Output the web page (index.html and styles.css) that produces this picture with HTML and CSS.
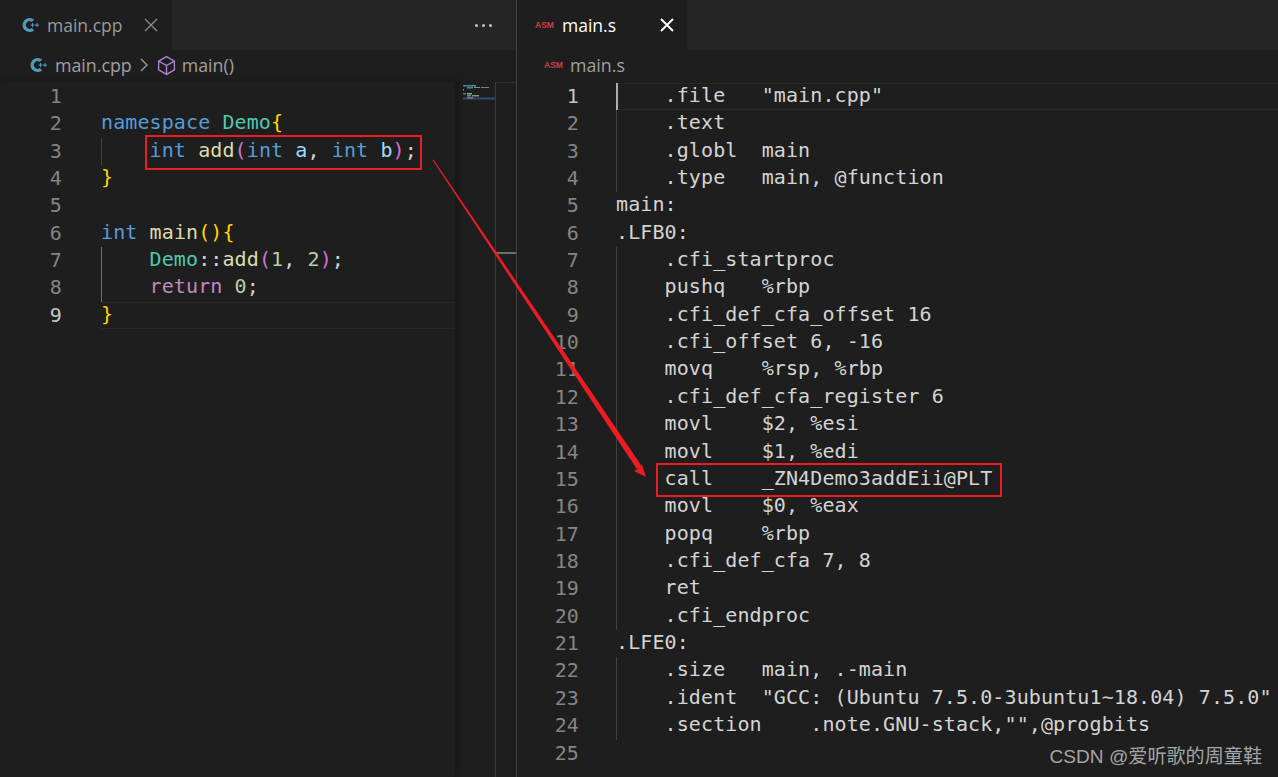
FILE: index.html
```html
<!DOCTYPE html>
<html lang="en">

<head>
    <meta charset="UTF-8">
    <title>main.s</title>
    <link rel="stylesheet" href="styles.css">
</head>

<body>
    <div class="workbench">
        <div class="pane pane-left">
            <div class="tabs">
                <div class="tab tab-left">
                    <svg class="cpp-icon" viewBox="0 0 17 16"><path class="cpp-c" d="M11 3.800A5.400 5.400 0 1 0 11 12.200" /><path class="cpp-plus" d="M8.500 8H12.500M10.500 6V10M13 8H17M15 6V10" /></svg>
                    <span class="tab-name">main.cpp</span>
                    <svg class="tab-close" viewBox="0 0 16 16"><path d="M2 2L14 14M14 2L2 14" /></svg>
                </div>
                <div class="tab-rest">
                    <span class="dots"><i></i><i></i><i></i></span>
                </div>
            </div>
            <div class="crumbs crumbs-left">
                <svg class="cpp-icon" viewBox="0 0 17 16"><path class="cpp-c" d="M11 3.800A5.400 5.400 0 1 0 11 12.200" /><path class="cpp-plus" d="M8.500 8H12.500M10.500 6V10M13 8H17M15 6V10" /></svg>
                <span class="crumb-file">main.cpp</span>
                <svg class="crumb-arrow" viewBox="0 0 10 16"><path d="M2 2L8 8L2 14" /></svg>
                <svg class="cube" viewBox="0 0 20 20"><path d="M10 1.500L17.500 5.800V14.200L10 18.500L2.500 14.200V5.800ZM2.500 5.800L10 10L17.500 5.800M10 10V18.500" /></svg>
                <span>main()</span>
            </div>
            <div class="body">
                <div class="code code-left">
                    <div class="line"><span class="num">1</span><span class="src"></span></div>
                    <div class="line"><span class="num">2</span><span class="src"><b class="kw">namespace</b> <b class="ty">Demo</b><b class="br">{</b></span></div>
                    <div class="line"><span class="num">3</span><span class="src guide">    <b class="kw">int</b> <b class="fn">add</b><b class="br2">(</b><b class="kw">int</b> <b class="var">a</b>, <b class="kw">int</b> <b class="var">b</b><b class="br2">)</b>;</span></div>
                    <div class="line"><span class="num">4</span><span class="src"><b class="br">}</b></span></div>
                    <div class="line"><span class="num">5</span><span class="src"></span></div>
                    <div class="line"><span class="num">6</span><span class="src"><b class="kw">int</b> <b class="fn">main</b><b class="br">()</b><b class="br">{</b></span></div>
                    <div class="line"><span class="num">7</span><span class="src guide guide-on">    <b class="ty">Demo</b>::<b class="fn">add</b><b class="br2">(</b><b class="lit">1</b>, <b class="lit">2</b><b class="br2">)</b>;</span></div>
                    <div class="line"><span class="num">8</span><span class="src guide guide-on">    <b class="ctl">return</b> <b class="lit">0</b>;</span></div>
                    <div class="line active"><span class="num">9</span><span class="src"><b class="br">}</b></span></div>
                </div>
                <div class="minimap">
                    <svg class="mini-lines" viewBox="0 0 32 18">
                        <rect x="0" y="15.500" width="32" height="2" fill="#264f78" />
                        <rect x="0" y="3" width="9" height="1.500" fill="#4a80ac" />
                        <rect x="9" y="3" width="4" height="1.500" fill="#3f9f8c" />
                        <rect x="4" y="5" width="6" height="1.500" fill="#4a80ac" />
                        <rect x="11" y="5" width="6" height="1" fill="#8f8f7a" />
                        <rect x="18" y="5" width="8" height="1" fill="#5f88a8" />
                        <rect x="0" y="7" width="1" height="1.500" fill="#b89a20" />
                        <rect x="0" y="11" width="3" height="1.500" fill="#4a80ac" />
                        <rect x="4" y="11" width="5" height="1.500" fill="#a0a080" />
                        <rect x="4" y="13" width="4" height="1.500" fill="#3f9f8c" />
                        <rect x="9" y="13" width="7" height="1.500" fill="#8f8f7a" />
                        <rect x="4" y="15" width="6" height="1.500" fill="#95688f" />
                    </svg>
                </div>
                <div class="scrollbar"><span class="scroll-mark"></span></div>
            </div>
        </div>
        <div class="pane pane-right">
            <div class="tabs">
                <div class="tab tab-right">
                    <span class="asm-icon">ASM</span>
                    <span class="tab-name tab-name-on">main.s</span>
                    <svg class="tab-close tab-close-on" viewBox="0 0 16 16"><path d="M2 2L14 14M14 2L2 14" /></svg>
                </div>
                <div class="tab-rest"></div>
            </div>
            <div class="crumbs crumbs-right">
                <span class="asm-icon">ASM</span>
                <span>main.s</span>
            </div>
            <div class="code code-right">
                <div class="line active-s"><span class="num num-on">1</span><span class="src guide cursor">    .file   "main.cpp"</span></div>
                <div class="line"><span class="num">2</span><span class="src guide">    .text</span></div>
                <div class="line"><span class="num">3</span><span class="src guide">    .globl  main</span></div>
                <div class="line"><span class="num">4</span><span class="src guide">    .type   main, @function</span></div>
                <div class="line"><span class="num">5</span><span class="src">main:</span></div>
                <div class="line"><span class="num">6</span><span class="src">.LFB0:</span></div>
                <div class="line"><span class="num">7</span><span class="src guide">    .cfi_startproc</span></div>
                <div class="line"><span class="num">8</span><span class="src guide">    pushq   %rbp</span></div>
                <div class="line"><span class="num">9</span><span class="src guide">    .cfi_def_cfa_offset 16</span></div>
                <div class="line"><span class="num">10</span><span class="src guide">    .cfi_offset 6, -16</span></div>
                <div class="line"><span class="num">11</span><span class="src guide">    movq    %rsp, %rbp</span></div>
                <div class="line"><span class="num">12</span><span class="src guide">    .cfi_def_cfa_register 6</span></div>
                <div class="line"><span class="num">13</span><span class="src guide">    movl    $2, %esi</span></div>
                <div class="line"><span class="num">14</span><span class="src guide">    movl    $1, %edi</span></div>
                <div class="line"><span class="num">15</span><span class="src guide">    call    _ZN4Demo3addEii@PLT</span></div>
                <div class="line"><span class="num">16</span><span class="src guide">    movl    $0, %eax</span></div>
                <div class="line"><span class="num">17</span><span class="src guide">    popq    %rbp</span></div>
                <div class="line"><span class="num">18</span><span class="src guide">    .cfi_def_cfa 7, 8</span></div>
                <div class="line"><span class="num">19</span><span class="src guide">    ret</span></div>
                <div class="line"><span class="num">20</span><span class="src guide">    .cfi_endproc</span></div>
                <div class="line"><span class="num">21</span><span class="src">.LFE0:</span></div>
                <div class="line"><span class="num">22</span><span class="src guide">    .size   main, .-main</span></div>
                <div class="line"><span class="num">23</span><span class="src guide">    .ident  "GCC: (Ubuntu 7.5.0-3ubuntu1~18.04) 7.5.0"</span></div>
                <div class="line"><span class="num">24</span><span class="src guide">    .section    .note.GNU-stack,"",@progbits</span></div>
                <div class="line"><span class="num">25</span><span class="src"></span></div>
            </div>
        </div>
    </div>

    <!-- annotations drawn on top of the screenshot -->
    <div class="mark mark-add"></div>
    <div class="mark mark-call"></div>
    <svg class="arrow" viewBox="0 0 1278 777">
        <path d="M432.500 160L433.500 159.500L641 465L637.500 470Z" fill="#ed1c24" />
        <path d="M646 477L634 471L638.500 469L641 465L642 464.500Z" fill="#ed1c24" />
    </svg>
    <div class="watermark">CSDN @爱听歌的周童鞋</div>
</body>

</html>
```

FILE: styles.css
```css
* {
    margin: 0;
    padding: 0;
    box-sizing: border-box;
}

html,
body {
    height: 100%;
    overflow: hidden;
    background: #1e1e1e;
}

.workbench {
    display: flex;
    height: 777px;
    font-family: "Open Sans", "Noto Sans", sans-serif;
}

.pane {
    display: flex;
    flex-direction: column;
}

.pane-left {
    width: 517px;
    border-right: 1px solid #444;
}

.pane-right {
    flex: 1;
    min-width: 0;
}

/* tabs */
.tabs {
    display: flex;
    height: 50px;
    flex: none;
    background: #252526;
}

.tab {
    display: flex;
    align-items: center;
    background: #1e1e1e;
    font-size: 17.500px;
}

.tab-left {
    width: 172px;
    padding-left: 22px;
}

.tab-right {
    width: 170px;
    padding-left: 18px;
}

.tab-name {
    color: #9a9a9a;
}

.tab-name-on {
    color: #fff;
}

.tab-left .tab-name {
    margin-left: 8px;
}

.tab-right .tab-name {
    margin-left: 8px;
}

.tab-close {
    width: 16px;
    height: 16px;
    fill: none;
    stroke: #8c8c8c;
    stroke-width: 1.300;
}

.tab-left .tab-close {
    margin-left: 21px;
}

.tab-close-on {
    margin-left: 43px;
    stroke: #fff;
    stroke-width: 1.900;
}

.tab-rest {
    flex: 1;
    display: flex;
    align-items: center;
    justify-content: flex-end;
}

.dots {
    display: flex;
    gap: 4px;
    margin-right: 24px;
}

.dots i {
    width: 3px;
    height: 3px;
    border-radius: 50%;
    background: #c5c5c5;
}

/* breadcrumbs */
.crumbs {
    display: flex;
    align-items: center;
    height: 30px;
    margin-bottom: 2px;
    flex: none;
    font-size: 17.800px;
    color: #a0a0a0;
}

.crumbs-left {
    padding-left: 30px;
}

.crumb-file {
    margin-left: 8px;
}

.crumbs-right {
    padding-left: 27px;
}

.crumbs-right .asm-icon {
    margin-right: 7px;
}

.crumb-arrow {
    width: 10px;
    height: 16px;
    margin: 0 7px 0 7px;
    fill: none;
    stroke: #a0a0a0;
    stroke-width: 1.300;
}

.cube {
    width: 21px;
    height: 21px;
    margin-right: 5px;
    fill: none;
    stroke: #b180d7;
    stroke-width: 1.300;
}

.cpp-icon {
    width: 17px;
    height: 16px;
    flex: none;
    fill: none;
}

.cpp-c {
    stroke: #519aba;
    stroke-width: 3.400;
}

.cpp-plus {
    stroke: #519aba;
    stroke-width: 1;
}

.asm-icon {
    color: #cc3e44;
    font-family: "Liberation Sans", sans-serif;
    font-size: 8.500px;
    font-weight: bold;
    width: 19px;
}

/* editor */
.body {
    display: flex;
    flex: 1;
    min-height: 0;
}

.code {
    font-family: "DejaVu Sans Mono", monospace;
    font-size: 20px;
    letter-spacing: 0.100px;
    color: #d4d4d4;
    padding-top: 0.900px;
}

.code-left {
    width: 455px;
    flex: none;
    box-shadow: 3px 0 4px #181818;
}

.line {
    display: flex;
    height: 27.360px;
    line-height: 27.360px;
}

.num {
    width: 62px;
    flex: none;
    text-align: right;
    color: #858585;
}

.src {
    flex: 1;
    margin-left: 39px;
    line-height: 25.360px;
    white-space: pre;
}

.src b {
    font-weight: normal;
}

.guide {
    box-shadow: inset 1px 0 0 #404040;
}

.guide-on {
    box-shadow: inset 1px 0 0 #707070;
}

.active .num,
.num-on {
    color: #c6c6c6;
}

.active .src,
.active-s .src {
    box-shadow: inset 0 1px 0 #282828, inset 0 -1px 0 #282828;
}

.active-s .cursor {
    box-shadow: inset 2px 0 0 #aeafad, inset 0 1px 0 #282828, inset 0 -1px 0 #282828;
}

.kw {
    color: #569cd6;
}

.ty {
    color: #4ec9b0;
}

.fn {
    color: #dcdcaa;
}

.var {
    color: #9cdcfe;
}

.lit {
    color: #b5cea8;
}

.ctl {
    color: #c586c0;
}

.br {
    color: #ffd700;
}

.br2 {
    color: #da70d6;
}

.minimap {
    width: 41px;
    flex: none;
    border-right: 1px solid #3a3a3a;
}

.mini-lines {
    display: block;
    width: 32px;
    height: 18px;
    margin-left: 8px;
}

.scrollbar {
    flex: 1;
    border-top: 1px solid #303030;
}

.scroll-mark {
    display: block;
    height: 2px;
    margin-top: 169px;
    background: #6e6e6e;
}

.code-right {
    flex: 1;
}

.code-right .src {
    margin-left: 37px;
}

/* overlays */
.mark {
    position: absolute;
    border: 2px solid #ed1c24;
}

.mark-add {
    left: 145px;
    top: 135px;
    width: 277px;
    height: 35px;
}

.mark-call {
    left: 656px;
    top: 463px;
    width: 346px;
    height: 34px;
}

.arrow {
    position: absolute;
    left: 0;
    top: 0;
    width: 1278px;
    height: 777px;
}

.watermark {
    position: absolute;
    right: 16px;
    bottom: 8px;
    font-family: "Liberation Sans", "Noto Sans CJK SC", sans-serif;
    font-size: 19.100px;
    color: #a5a5a5;
}
```
